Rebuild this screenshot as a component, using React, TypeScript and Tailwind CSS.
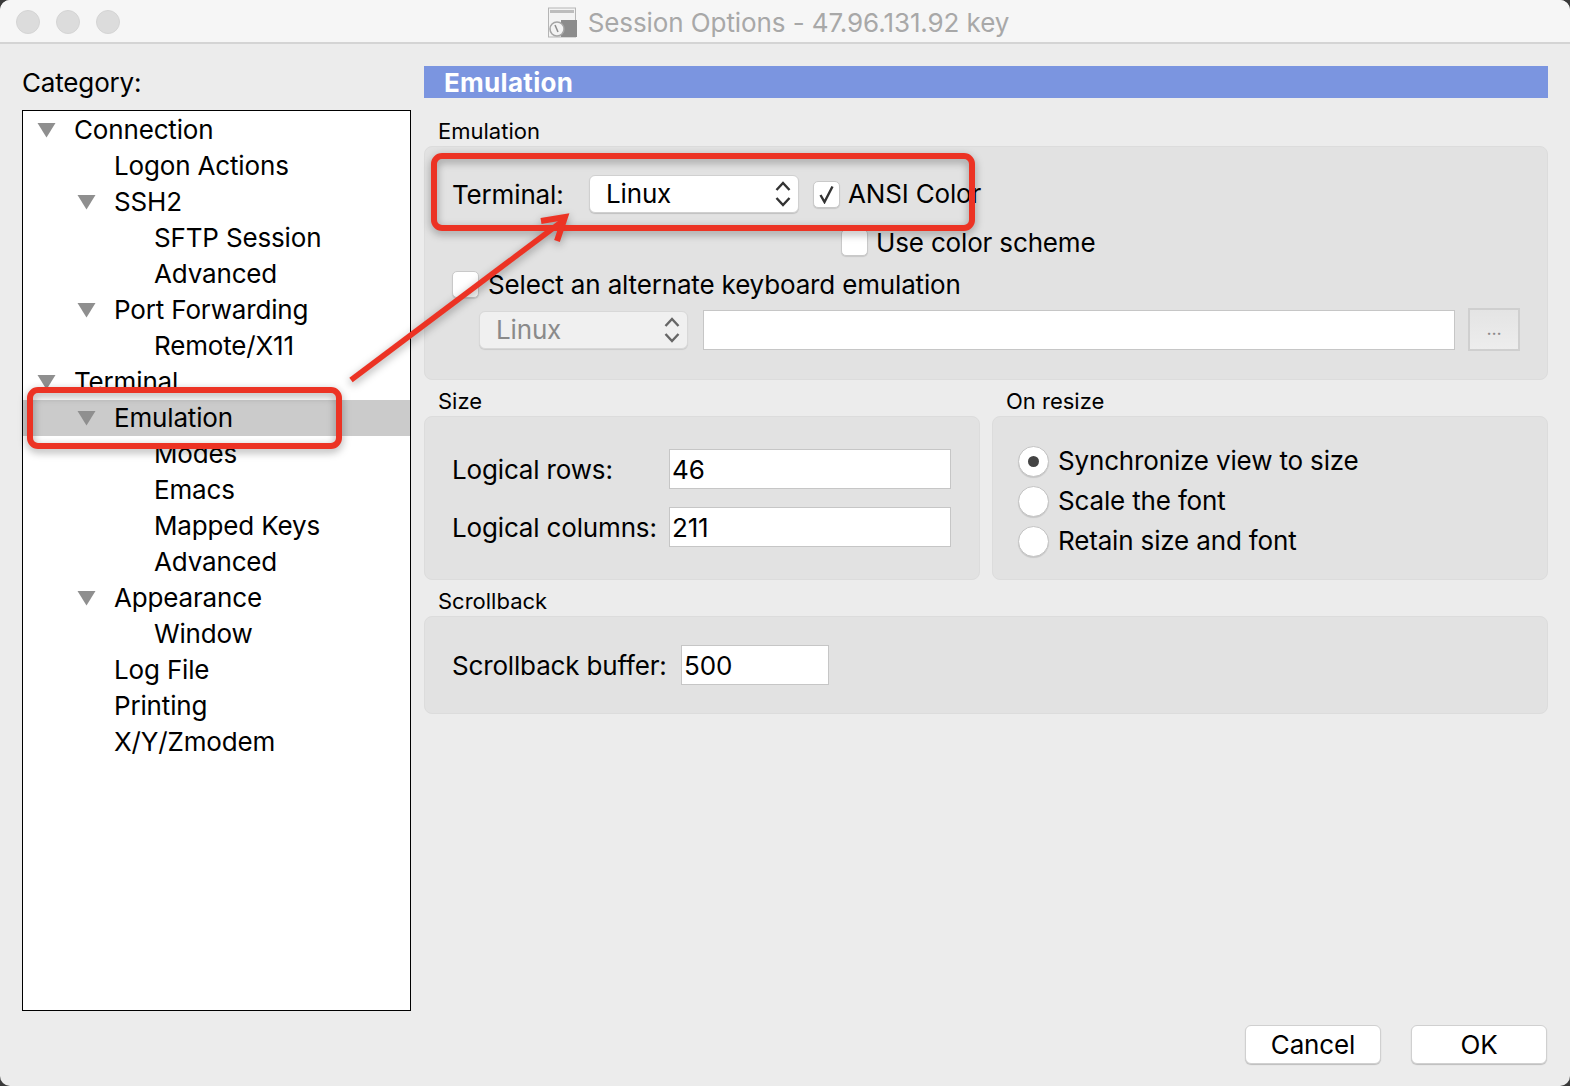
const treeRows: { label: string; level: number; open?: boolean; selected?: boolean }[] = [
  { label: "Connection", level: 0, open: true },
  { label: "Logon Actions", level: 1 },
  { label: "SSH2", level: 1, open: true },
  { label: "SFTP Session", level: 2 },
  { label: "Advanced", level: 2 },
  { label: "Port Forwarding", level: 1, open: true },
  { label: "Remote/X11", level: 2 },
  { label: "Terminal", level: 0, open: true },
  { label: "Emulation", level: 1, open: true, selected: true },
  { label: "Modes", level: 2 },
  { label: "Emacs", level: 2 },
  { label: "Mapped Keys", level: 2 },
  { label: "Advanced", level: 2 },
  { label: "Appearance", level: 1, open: true },
  { label: "Window", level: 2 },
  { label: "Log File", level: 1 },
  { label: "Printing", level: 1 },
  { label: "X/Y/Zmodem", level: 1 },
];

function TreeRow({ label, level, open, selected }: (typeof treeRows)[number]) {
  return (
    <div className={`relative flex h-9 items-center ${selected ? "bg-[#cbcbcb]" : ""}`}>
      {level === 0 && <div className="w-[51px] shrink-0" />}
      {level === 1 && <div className="w-[91px] shrink-0" />}
      {level === 2 && <div className="w-[131px] shrink-0" />}
      {open && (
        <svg
          className={`absolute top-[10px] ${level === 0 ? "left-[14px]" : "left-[54px]"}`}
          width="19"
          height="16"
          viewBox="0 0 19 16"
        >
          <path d="M0.5 1 H18.5 L9.5 15.5 Z" fill="#8f8f8f" />
        </svg>
      )}
      <span>{label}</span>
    </div>
  );
}

function Stepper({ color }: { color: string }) {
  return (
    <svg width="18" height="30" viewBox="0 0 18 30" fill="none" stroke={color} strokeWidth="2.4">
      <path d="M2.5 11 L9 4 L15.5 11" />
      <path d="M2.5 19 L9 26 L15.5 19" />
    </svg>
  );
}

function CheckBox({ checked }: { checked?: boolean }) {
  return (
    <div className="flex h-[27px] w-[27px] shrink-0 items-center justify-center rounded-[5px] border border-[#c9c9c9] bg-white shadow-[0_1px_1px_rgba(0,0,0,0.12)]">
      {checked && (
        <svg width="17" height="19" viewBox="0 0 17 19" fill="none" stroke="#333333" strokeWidth="2.4">
          <path d="M2.5 10 L6.5 17 L14.5 1.5" />
        </svg>
      )}
    </div>
  );
}

function Radio({ label, checked }: { label: string; checked?: boolean }) {
  return (
    <div className="flex h-10 items-center gap-[9px]">
      <div className="flex h-[31px] w-[31px] items-center justify-center rounded-full border border-[#c4c4c4] bg-white shadow-[0_1px_1px_rgba(0,0,0,0.12)]">
        {checked && <div className="h-[11px] w-[11px] rounded-full bg-[#444444]" />}
      </div>
      <span>{label}</span>
    </div>
  );
}

function TextBox({ value, className }: { value?: string; className: string }) {
  return (
    <div className={`flex items-center border border-[#c6c6c6] bg-white pt-[2px] pl-[2px] ${className}`}>{value}</div>
  );
}

function GroupLabel({ children }: { children: string }) {
  return <div className="flex h-[30px] items-center pl-[14px] text-[22px] tracking-normal">{children}</div>;
}

export default function App() {
  return (
    <div className="relative h-[1086px] w-[1570px] overflow-hidden bg-[#3a3a3a] text-[26px] leading-none tracking-[-0.16px] text-black [font-family:Inter,'Liberation_Sans',sans-serif]">
      <div className="flex h-full flex-col overflow-hidden rounded-[10px] bg-[#ececec]">
        {/* title bar */}
        <div className="relative flex h-[44px] shrink-0 items-center justify-center gap-[10px] border-b-2 border-[#d4d4d4] bg-[#f6f6f6] pr-[14px]">
          <div className="absolute top-[10px] left-[16px] flex gap-[16px]">
            <div className="h-6 w-6 rounded-full border border-[#d4d4d4] bg-[#dcdcdc]" />
            <div className="h-6 w-6 rounded-full border border-[#d4d4d4] bg-[#dcdcdc]" />
            <div className="h-6 w-6 rounded-full border border-[#d4d4d4] bg-[#dcdcdc]" />
          </div>
          <svg className="mt-[2px]" width="31" height="31" viewBox="0 0 31 31">
            <rect x="1.5" y="1" width="27" height="29" fill="#f3f3f3" stroke="#b5b5b5" />
            <rect x="3" y="3" width="24" height="3" fill="#bdbdbd" />
            <rect x="14" y="13" width="16" height="17" fill="#8c8c8c" />
            <circle cx="10" cy="22" r="7" fill="#f3f3f3" stroke="#a5a5a5" strokeWidth="1.5" />
            <path d="M8 18 L11 25" stroke="#8c8c8c" strokeWidth="1.5" />
          </svg>
          <span className="pt-[4px] tracking-[-0.09px] text-[#a8a8a8]">Session Options - 47.96.131.92 key</span>
        </div>

        <div className="flex min-h-0 flex-1 pt-[22px] pr-[22px] pl-[22px]">
          {/* category tree */}
          <div className="flex w-[389px] shrink-0 flex-col">
            <div className="flex h-[34px] items-center">Category:</div>
            <div className="mt-[10px] h-[901px] border border-black bg-white pt-[1px]">
              {treeRows.map((row, i) => (
                <TreeRow key={i} {...row} />
              ))}
            </div>
          </div>

          <div className="ml-[13px] flex flex-1 flex-col">
            <div className="flex h-8 items-center bg-[#7b95e0] pt-[2px] pl-[20px] font-bold tracking-[0.3px] text-white">
              Emulation
            </div>

            <div className="mt-[18px]">
              <GroupLabel>Emulation</GroupLabel>
              <div className="h-[234px] rounded-lg border border-[#dcdcdc] bg-[#e2e2e2] pt-[28px]">
                <div className="flex h-[38px] items-center pl-[27px]">
                  <span className="w-[137px] pt-[2px]">Terminal:</span>
                  <div className="flex h-[38px] w-[210px] items-center justify-between rounded-md border border-[#d0d0d0] bg-white pr-[6px] pl-[16px] shadow-[0_1px_1px_rgba(0,0,0,0.15)]">
                    Linux
                    <Stepper color="#333333" />
                  </div>
                  <div className="ml-[14px] flex items-center gap-[8px]">
                    <CheckBox checked />
                    <span>ANSI Color</span>
                  </div>
                </div>
                <div className="mt-[16px] flex h-[27px] items-center gap-[8px] pl-[416px]">
                  <CheckBox />
                  <span>Use color scheme</span>
                </div>
                <div className="mt-[15px] flex h-[27px] items-center gap-[9px] pl-[27px]">
                  <CheckBox />
                  <span>Select an alternate keyboard emulation</span>
                </div>
                <div className="mt-[10px] flex items-center pl-[54px]">
                  <div className="flex h-[38px] w-[209px] items-center justify-between rounded-md border border-[#d8d8d8] bg-[#f0f0f0] pr-[6px] pl-[16px] text-[#8a8a8a] shadow-[0_1px_1px_rgba(0,0,0,0.1)]">
                    Linux
                    <Stepper color="#666666" />
                  </div>
                  <TextBox className="ml-[15px] h-[40px] w-[752px]" />
                  <div className="ml-[13px] flex h-[43px] w-[52px] items-center justify-center border-2 border-[#cfcfcf] bg-gradient-to-b from-[#e4e4e4] to-[#ededed] pb-[2px] text-[18px] text-[#8a8a8a]">
                    ...
                  </div>
                </div>
              </div>
            </div>

            <div className="mt-[6px] flex gap-[12px]">
              <div className="w-[556px]">
                <GroupLabel>Size</GroupLabel>
                <div className="h-[164px] rounded-lg border border-[#dcdcdc] bg-[#e2e2e2] pt-[32px] pl-[27px]">
                  <div className="flex h-10 items-center">
                    <span className="w-[217px] pt-[2px]">Logical rows:</span>
                    <TextBox value="46" className="h-10 w-[282px]" />
                  </div>
                  <div className="mt-[18px] flex h-10 items-center">
                    <span className="w-[217px] pt-[2px]">Logical columns:</span>
                    <TextBox value="211" className="h-10 w-[282px]" />
                  </div>
                </div>
              </div>
              <div className="flex-1">
                <GroupLabel>On resize</GroupLabel>
                <div className="h-[164px] rounded-lg border border-[#dcdcdc] bg-[#e2e2e2] pt-[24px] pl-[25px]">
                  <Radio label="Synchronize view to size" checked />
                  <Radio label="Scale the font" />
                  <Radio label="Retain size and font" />
                </div>
              </div>
            </div>

            <div className="mt-[6px]">
              <GroupLabel>Scrollback</GroupLabel>
              <div className="flex h-[98px] items-center rounded-lg border border-[#dcdcdc] bg-[#e2e2e2] pl-[27px]">
                <span className="w-[229px] pt-[2px]">Scrollback buffer:</span>
                <TextBox value="500" className="h-10 w-[148px]" />
              </div>
            </div>

            <div className="mt-auto mr-px mb-[22px] flex justify-end gap-[30px]">
              <div className="flex h-[39px] w-[136px] items-center justify-center rounded-md border border-[#d0d0d0] bg-white shadow-[0_1px_1px_rgba(0,0,0,0.2)]">
                Cancel
              </div>
              <div className="flex h-[39px] w-[136px] items-center justify-center rounded-md border border-[#d0d0d0] bg-white shadow-[0_1px_1px_rgba(0,0,0,0.2)]">
                OK
              </div>
            </div>
          </div>
        </div>
      </div>

      {/* red annotations drawn on top of the dialog */}
      <svg
        className="pointer-events-none absolute top-0 left-0 drop-shadow-[0_3px_4px_rgba(0,0,0,0.35)]"
        width="1570"
        height="1086"
        fill="none"
        stroke="#ec3324"
        strokeWidth="6"
      >
        <rect x="434" y="156" width="538" height="72" rx="8" />
        <rect x="30" y="390" width="309" height="56" rx="8" />
        <path d="M351 380 L564 220" strokeWidth="5.5" />
        <path d="M541 221 L565 217 L557 241" strokeWidth="6" />
      </svg>
    </div>
  );
}
